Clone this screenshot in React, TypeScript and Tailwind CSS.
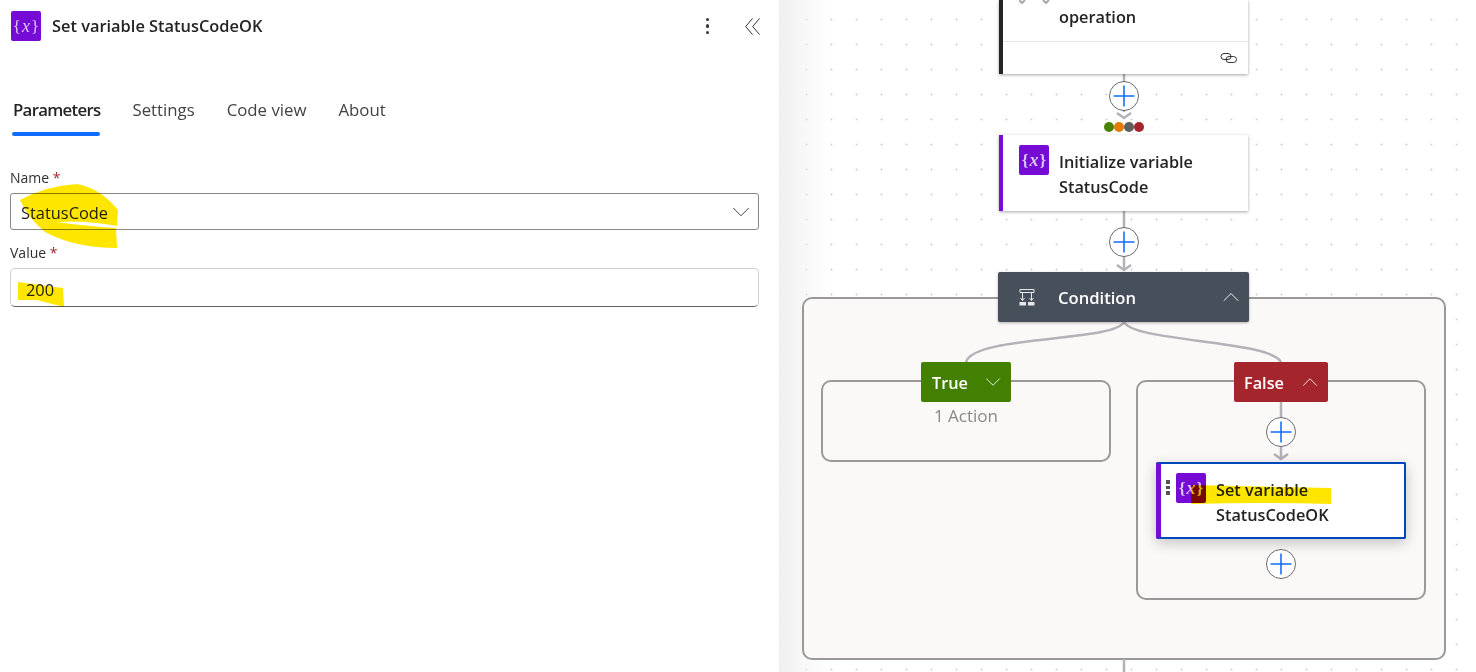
import React from "react";
import { ChevronDown, ChevronUp, Plus } from "lucide-react";

const VarIcon = ({ className }: { className: string }) => (
  <div className={`absolute flex h-[30px] w-[30px] items-center justify-center rounded-[2px] bg-[#770bd6] font-['Liberation_Serif',serif] text-[#dcc6f4] ${className}`}>
    <span className="text-[17px] leading-none">{"{"}</span>
    <span className="mx-[1px] text-[18px] leading-none italic">x</span>
    <span className="text-[17px] leading-none">{"}"}</span>
  </div>
);

const AddButton = ({ className }: { className: string }) => (
  <div className={`absolute flex h-[30px] w-[30px] items-center justify-center rounded-full border border-[#6b6b6b] bg-white text-[#0f6cff] ${className}`}>
    <Plus size={34} strokeWidth={1.1} className="shrink-0" />
  </div>
);

const Arrow = ({ className }: { className: string }) => (
  <svg className={`absolute h-[8px] w-[16px] ${className}`} viewBox="0 0 16 8" fill="none" stroke="#b4b2b8" strokeWidth="2.5">
    <path d="M1 1l7 5 7-5" />
  </svg>
);

const Parameter = ({ label, children, top }: { label: string; children: React.ReactNode; top: string }) => (
  <div className={top}>
    <div className="text-[14px] leading-[18px] text-[#323130]">
      {label} <span className="text-[#a4262c]">*</span>
    </div>
    {children}
  </div>
);

export default function App() {
  return (
    <div className="relative flex h-[672px] w-[1476px] overflow-hidden bg-white font-['Open_Sans',sans-serif] text-[#242424]">
      <aside className="w-[779px] shrink-0 bg-white">
        <header className="flex h-[52px] items-center pl-[11px] pr-[19px]">
          <div className="relative h-[30px] w-[30px]">
            <VarIcon className="left-0 top-0" />
          </div>
          <h1 className="ml-[11px] flex-1 text-[16.4px] font-semibold">Set variable StatusCodeOK</h1>
          <div className="mr-[36px] flex flex-col gap-[3px]">
            <span className="h-[3.5px] w-[3.5px] rounded-full bg-[#333]" />
            <span className="h-[3.5px] w-[3.5px] rounded-full bg-[#333]" />
            <span className="h-[3.5px] w-[3.5px] rounded-full bg-[#333]" />
          </div>
          <svg className="h-[17px] w-[15px]" viewBox="0 0 15 17" fill="none" stroke="#333" strokeWidth="1">
            <path d="M7.5 0.5L0.7 8.5L7.5 16.5M14.5 0.5L7.7 8.5L14.5 16.5" />
          </svg>
        </header>

        <nav className="mt-[42px] flex gap-[32px] pl-[13px] text-[16.8px] text-[#424242]">
          <div className="relative h-[42px] font-semibold tracking-[-0.7px] text-[#242424]">
            <span className="leading-[32px]">Parameters</span>
            <span className="absolute bottom-0 left-[-1px] right-0 h-[4px] rounded-full bg-[#0f6cff]" />
          </div>
          <span className="leading-[32px]">Settings</span>
          <span className="leading-[32px]">Code view</span>
          <span className="leading-[32px]">About</span>
        </nav>

        <div className="px-[10px] pr-[20px]">
          <Parameter label="Name" top="mt-[33px]">
            <div className="mt-[6px] flex h-[37px] items-center justify-between rounded-[3px] border border-[#8a8886] pl-[10px] pr-[2px] text-[16.4px]">
              <span className="mt-[4px]">StatusCode</span>
              <ChevronDown size={30} strokeWidth={0.8} className="text-[#424242]" />
            </div>
          </Parameter>
          <Parameter label="Value" top="mt-[14px]">
            <div className="mt-[6px] flex h-[39px] items-center rounded-[5px] border border-[#d1d1d1] border-b-[#616161] pl-[15px] text-[16.4px]">
              <span className="mt-[5px]">200</span>
            </div>
          </Parameter>
        </div>
      </aside>

      <main className="relative flex-1 bg-[radial-gradient(circle,#cfcfcf_0.9px,transparent_1.1px)] bg-[length:25px_25px] bg-[position:-10px_7px]">
        <div className="absolute inset-y-0 left-0 w-[50px] bg-gradient-to-r from-[#f0f0f0] to-transparent" />

        {/* outer condition box and its branches */}
        <div className="absolute left-[23px] top-[297px] h-[363px] w-[644px] rounded-[10px] border-2 border-[#999] bg-[#faf9f8]" />
        <div className="absolute left-[42px] top-[380px] h-[82px] w-[290px] rounded-[10px] border-2 border-[#999] bg-[#faf9f8]" />
        <div className="absolute left-[357px] top-[380px] h-[220px] w-[290px] rounded-[10px] border-2 border-[#999] bg-[#faf9f8]" />

        {/* connector lines */}
        <svg className="absolute left-0 top-0 h-[672px] w-[697px]" viewBox="0 0 697 672" fill="none" stroke="#b4b2b8" strokeWidth="2.5">
          <path d="M345 74V112M345 211V270M345 659V672M502 402V460" />
          <path d="M345 322C335 342 195 335 187 362" />
          <path d="M345 322C355 342 490 340 502 362" />
        </svg>

        {/* operation card */}
        <section className="absolute left-[220px] top-0 h-[74px] w-[249px] border-l-4 border-[#242424] bg-white shadow-[0_1px_3px_rgba(0,0,0,0.35)]">
          <svg className="absolute left-[16px] top-0 h-[4px] w-[32px]" viewBox="0 0 32 4" fill="none" stroke="#a8a8a8" strokeWidth="2">
            <path d="M0 0l3 3 3-3M24 0l3 3 3-3" />
          </svg>
          <div className="pl-[56px] pt-[5px] text-[16.3px] font-semibold leading-[24px]">operation</div>
          <div className="absolute left-0 right-0 top-[41px] border-t border-[#e6e6e6]" />
          <svg className="absolute right-[10px] top-[52px] h-[12px] w-[18px]" viewBox="0 0 18 12" fill="none" stroke="#333" strokeWidth="1">
            <rect x="1" y="1.5" width="10" height="6" rx="3" />
            <rect x="6" y="4.5" width="10.5" height="6" rx="3" />
          </svg>
        </section>

        <AddButton className="left-[330px] top-[81px]" />
        <Arrow className="left-[337px] top-[112px]" />
        <div className="absolute left-[325px] top-[122px] flex">
          <span className="h-[10px] w-[10px] rounded-full bg-[#498205]" />
          <span className="h-[10px] w-[10px] rounded-full bg-[#e07b00]" />
          <span className="h-[10px] w-[10px] rounded-full bg-[#605e5c]" />
          <span className="h-[10px] w-[10px] rounded-full bg-[#a4262c]" />
        </div>

        {/* initialize variable card */}
        <section className="absolute left-[220px] top-[135px] h-[76px] w-[249px] border-l-4 border-[#770bd6] bg-white pl-[56px] pt-[15px] text-[16.3px] font-semibold leading-[25px] shadow-[0_1px_3px_rgba(0,0,0,0.35)]">
          <VarIcon className="left-[16px] top-[10px]" />
          <div>Initialize variable</div>
          <div>StatusCode</div>
        </section>

        <AddButton className="left-[330px] top-[227px]" />
        <Arrow className="left-[337px] top-[264px]" />

        {/* condition header */}
        <section className="absolute left-[219px] top-[272px] flex h-[50px] w-[251px] items-center rounded-[2px] bg-[#474f5a] pl-[21px] pr-[4px] text-white shadow-[0_1px_3px_rgba(0,0,0,0.3)]">
          <svg className="h-[17px] w-[16px]" viewBox="0 0 16 17" fill="none" stroke="#e8e8e8" strokeWidth="1">
            <path d="M1 0.5h14v3H1zM3.5 3.5v8M12.5 3.5v8M1.5 9l2 2.5 2-2.5M10.5 9l2 2.5 2-2.5" />
            <path d="M0.5 13h6.5v3.5H0.5zM9 13h6.5v3.5H9z" fill="#e8e8e8" stroke="none" />
          </svg>
          <span className="ml-[23px] mt-[3px] flex-1 text-[16.6px] font-semibold">Condition</span>
          <ChevronUp size={28} strokeWidth={0.8} />
        </section>

        {/* true branch */}
        <div className="absolute left-[142px] top-[362px] flex h-[40px] w-[90px] items-center justify-between rounded-[2px] bg-[#437f00] pl-[11px] pr-[5px] text-[16.3px] font-semibold text-white">
          <span className="mt-[3px]">True</span>
          <ChevronDown size={26} strokeWidth={0.8} />
        </div>
        <div className="absolute left-[42px] top-[405px] w-[290px] text-center text-[17px] leading-[22px] text-[#8a8886]">1 Action</div>

        {/* false branch */}
        <div className="absolute left-[455px] top-[362px] flex h-[40px] w-[94px] items-center justify-between rounded-[2px] bg-[#a4262c] pl-[10px] pr-[5px] text-[16.3px] font-semibold text-white">
          <span className="mt-[3px]">False</span>
          <ChevronUp size={26} strokeWidth={0.8} />
        </div>
        <AddButton className="left-[487px] top-[417px]" />
        <Arrow className="left-[494px] top-[453px]" />

        {/* selected card */}
        <section className="absolute left-[377px] top-[462px] h-[77px] w-[250px] rounded-[2px] border-2 border-l-[5px] border-[#0047bb] border-l-[#770bd6] bg-white pl-[55px] pt-[14px] text-[16.3px] font-semibold leading-[25px] shadow-[0_4px_14px_rgba(0,0,0,0.22)]">
          <VarIcon className="left-[15px] top-[9px]" />
          <div className="absolute left-[5px] top-[16px] flex flex-col gap-[2px]">
            <span className="h-[3.5px] w-[3.5px] bg-[#555]" />
            <span className="h-[3.5px] w-[3.5px] bg-[#555]" />
            <span className="h-[3.5px] w-[3.5px] bg-[#555]" />
          </div>
          <div>Set variable</div>
          <div>StatusCodeOK</div>
        </section>
        <AddButton className="left-[487px] top-[549px]" />
      </main>

      {/* marker highlights drawn over the screenshot */}
      <svg className="pointer-events-none absolute left-0 top-0 h-[672px] w-[1476px] mix-blend-multiply" viewBox="0 0 1476 672" fill="#ffe600">
        <path d="M20 200Q45 186 77 184Q100 188 118 210L117 226Q85 220 57 222Q85 226 116 228L117 248Q75 248 45 232Q28 218 20 200Z" />
        <path d="M18 282L63 288L64 307L37 300L18 300Z" />
        <path d="M1191 485L1331 488L1331 504Q1260 502 1191 504Z" />
      </svg>
    </div>
  );
}
